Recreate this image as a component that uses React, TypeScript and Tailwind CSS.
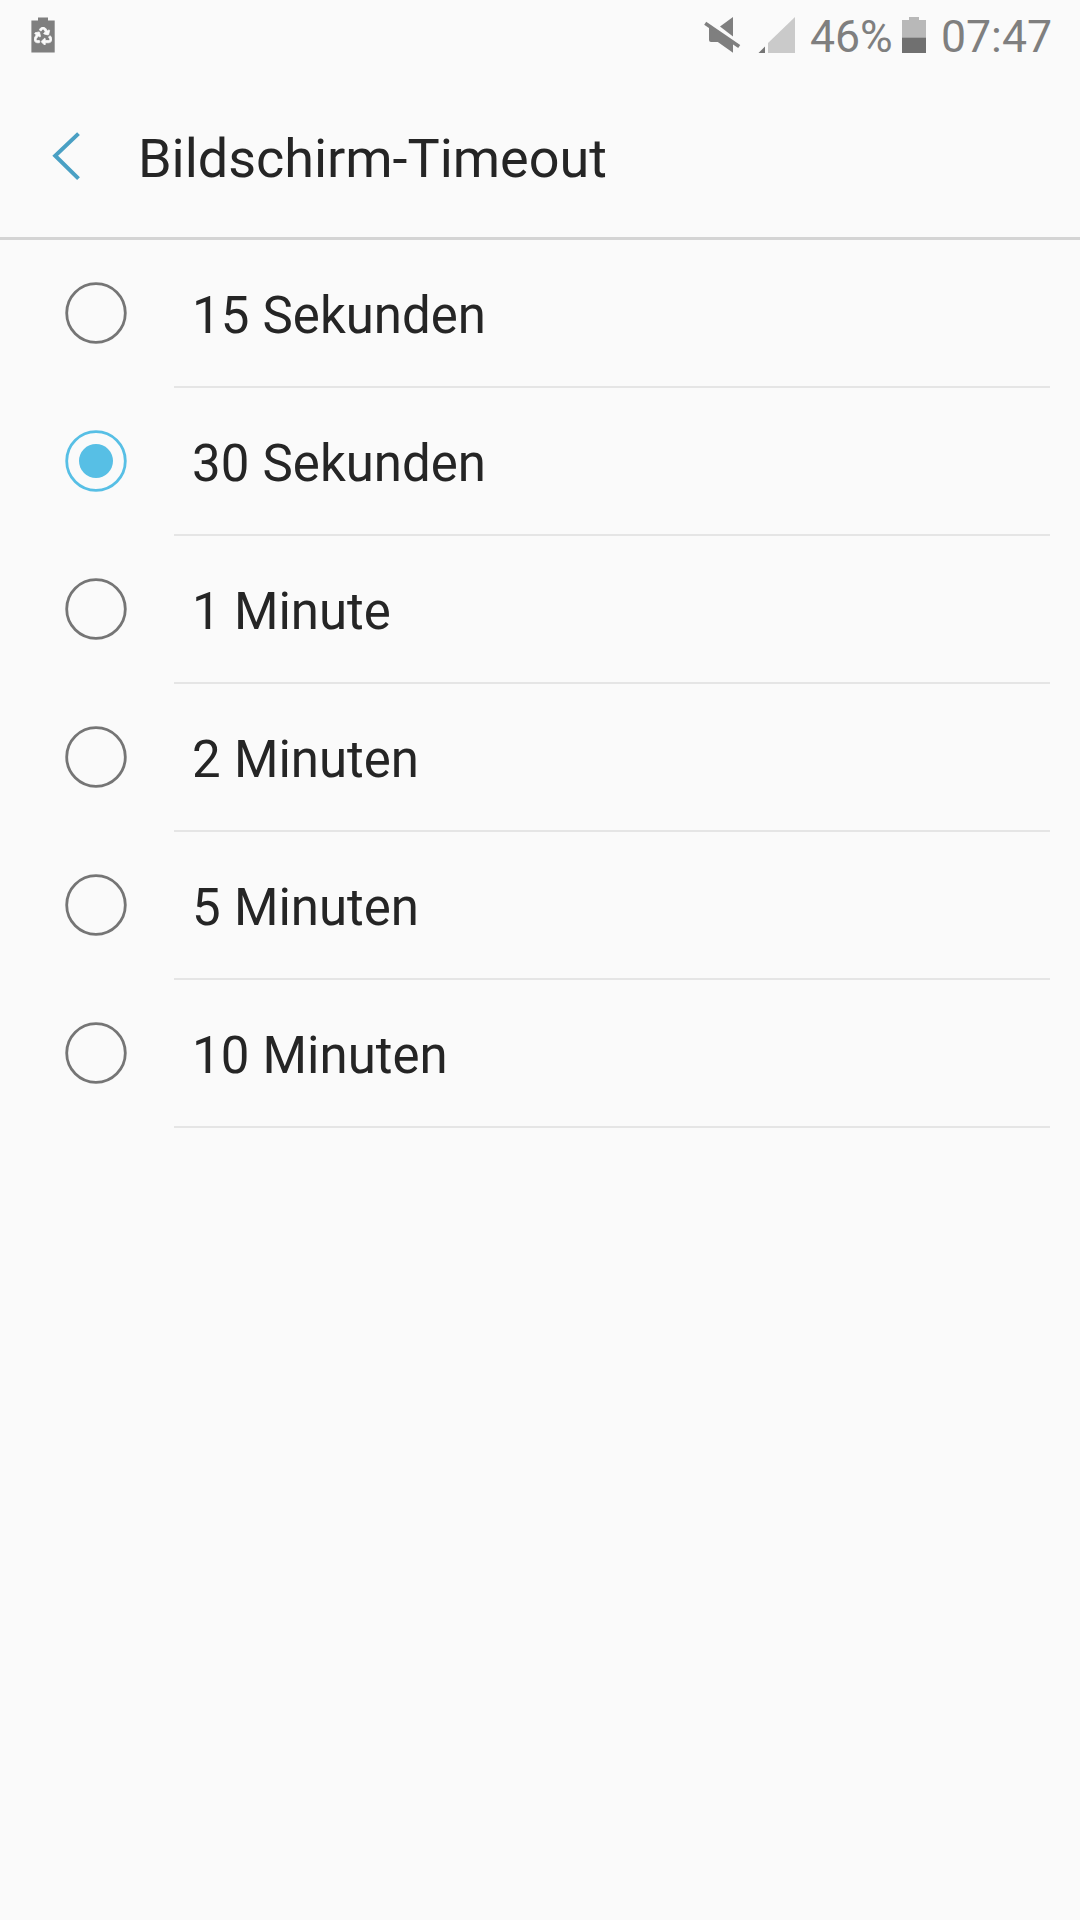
import { FaRecycle } from 'react-icons/fa';

const options = ['15 Sekunden', '30 Sekunden', '1 Minute', '2 Minuten', '5 Minuten', '10 Minuten'];

function Radio({ checked }: { checked: boolean }) {
  return (
    <svg className="ml-[64px] mt-[41px] h-16 w-16 shrink-0" viewBox="0 0 64 64" fill="none">
      <circle cx="32" cy="32" r="29.3" stroke={checked ? '#57bfe5' : '#757575'} strokeWidth="2.8" />
      {checked && <circle cx="32" cy="32" r="17" fill="#57bfe5" />}
    </svg>
  );
}

function StatusBar() {
  return (
    <div className="flex h-[72px] items-start pl-[31px] text-[#7f7f7f]">
      <div className="mt-[17px] grid h-9 w-6 shrink-0">
        <svg className="col-start-1 row-start-1 h-9 w-6" viewBox="0 0 24 36">
          <path d="M7 .5h10v3h6.7v32H.4v-32H7z" fill="#7f7f7f" />
        </svg>
        <FaRecycle className="col-start-1 row-start-1 ml-[3px] mt-[10px] h-[18px] w-[18px] stroke-[#fafafa] text-[#fafafa] [stroke-width:22]" />
      </div>
      <svg className="ml-[648px] mt-[16px] h-10 w-[38px]" viewBox="0 0 38 40" fill="#7f7f7f">
        <path d="M17 10.4 30 1v19.6z" />
        <path d="M6 10.5 30 26.5v10.3L14.8 26H8q-2 0-2-2z" />
        <path d="m2.2 7.2 34 23.4" stroke="#7f7f7f" strokeWidth="3.6" />
      </svg>
      <svg className="ml-[17px] mt-[16px] h-[38px] w-[37px]" viewBox="0 0 37 38">
        <path d="M37 1v36H10V27z" fill="#cacaca" />
        <path d="M7 30.5V37H.5z" fill="#757575" />
      </svg>
      <span className="ml-[15px] mt-[11px] w-[92px] text-[44.6px] leading-[53px]">46%</span>
      <svg className="mt-[17px] h-9 w-6" viewBox="0 0 24 36">
        <path d="M7 0h10v3h7v33H0V3h7z" fill="#b8b8b8" />
        <path d="M0 20.7h24V36H0z" fill="#707070" />
      </svg>
      <span className="ml-[15px] mt-[11px] text-[44.6px] leading-[53px]">07:47</span>
    </div>
  );
}

export default function App() {
  return (
    <main className="h-[1920px] w-[1080px] overflow-hidden bg-[#fafafa] font-['Roboto',sans-serif] text-[#252525]">
      <StatusBar />
      <header className="flex h-[168px] items-start border-b-[3px] border-[#d4d4d4]">
        <svg className="ml-[50px] mt-[60px] h-[50px] w-8" viewBox="0 0 32 50" fill="none">
          <path d="M28.5 1.6 5.2 23.8 28.5 46.6" stroke="#4aa0c4" strokeWidth="4" />
        </svg>
        <h1 className="ml-[56px] mt-[55px] text-[54px] font-normal leading-[64px] tracking-[-0.04px]">Bildschirm-Timeout</h1>
      </header>
      <div>
        {options.map((label, index) => (
          <div className="flex h-[148px]" key={label}>
            <Radio checked={index === 1} />
            <div className="ml-[46px] w-[876px] border-b-2 border-[#e5e5e5] pl-[18px] pt-[46px] text-[51px] leading-[60px] [word-spacing:0.6px]">{label}</div>
          </div>
        ))}
      </div>
    </main>
  );
}
